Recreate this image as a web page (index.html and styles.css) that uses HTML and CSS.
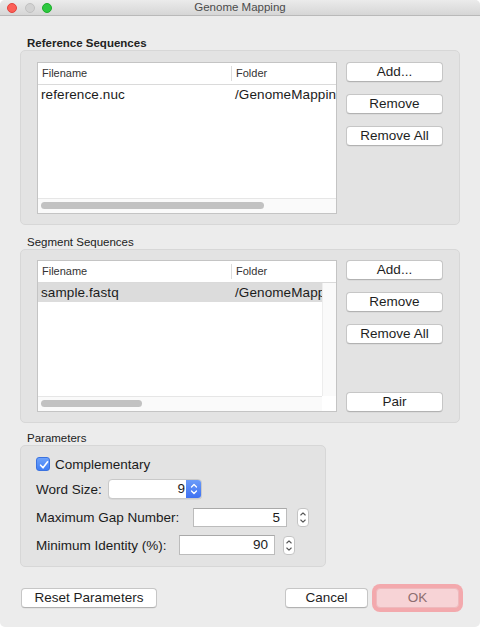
FILE: index.html
```html
<!DOCTYPE html>
<html>
<head>
<meta charset="utf-8">
<title>Genome Mapping</title>
<link rel="stylesheet" href="styles.css">
</head>
<body>
<div class="window">
  <div class="titlebar">
    <div class="lights">
      <span class="light red"></span>
      <span class="light gray"></span>
      <span class="light green"></span>
    </div>
    <div class="title">Genome Mapping</div>
    <div></div>
  </div>

  <div class="main">
    <div class="section-label bold">Reference Sequences</div>
    <div class="group group-list">
      <div class="table">
        <div class="thead">
          <div class="th">Filename</div>
          <div class="th th-sep">Folder</div>
        </div>
        <div class="tbody">
          <div class="rows">
            <div class="tr">
              <div class="td">reference.nuc</div>
              <div class="td td-folder">/GenomeMapping</div>
            </div>
          </div>
        </div>
        <div class="hscroll">
          <div class="htrack"><div class="thumb thumb-ref"></div></div>
        </div>
      </div>
      <div class="btn-col">
        <button class="btn">Add...</button>
        <button class="btn">Remove</button>
        <button class="btn">Remove All</button>
      </div>
    </div>

    <div class="section-label label-gap">Segment Sequences</div>
    <div class="group group-list group-seg">
      <div class="table">
        <div class="thead">
          <div class="th">Filename</div>
          <div class="th th-sep">Folder</div>
        </div>
        <div class="tbody">
          <div class="rows">
            <div class="tr selected">
              <div class="td">sample.fastq</div>
              <div class="td td-folder">/GenomeMappi</div>
            </div>
          </div>
          <div class="vtrack"></div>
        </div>
        <div class="hscroll">
          <div class="htrack"><div class="thumb thumb-seg"></div></div>
          <div class="corner"></div>
        </div>
      </div>
      <div class="btn-col">
        <button class="btn">Add...</button>
        <button class="btn">Remove</button>
        <button class="btn">Remove All</button>
        <button class="btn btn-pair">Pair</button>
      </div>
    </div>

    <div class="section-label label-gap-sm">Parameters</div>
    <div class="group group-params">
      <div class="prow prow-check">
        <span class="checkbox">
          <svg width="14" height="14" viewBox="0 0 14 14"><path d="M3.6 7.2 L6 9.8 L10.6 3.8" fill="none" stroke="#fff" stroke-width="1.6" stroke-linecap="round" stroke-linejoin="round"/></svg>
        </span>
        <span class="check-label">Complementary</span>
      </div>
      <div class="prow">
        <span class="plabel lbl-word">Word Size:</span>
        <span class="combo">
          <span class="combo-value">9</span>
          <span class="combo-step">
            <svg width="16" height="20" viewBox="0 0 16 20"><path d="M5.5 8 L8 5.5 L10.5 8 M5.5 12 L8 14.5 L10.5 12" fill="none" stroke="#fff" stroke-width="1.3" stroke-linecap="round" stroke-linejoin="round"/></svg>
          </span>
        </span>
      </div>
      <div class="prow">
        <span class="plabel lbl-gap">Maximum Gap Number:</span>
        <span class="field field-gap">5</span>
        <span class="stepper stepper-gap">
          <svg width="12" height="19" viewBox="0 0 12 19"><path d="M3.8 7 L6 4.8 L8.2 7 M3.8 12 L6 14.2 L8.2 12" fill="none" stroke="#555" stroke-width="1.1" stroke-linecap="round" stroke-linejoin="round"/></svg>
        </span>
      </div>
      <div class="prow">
        <span class="plabel lbl-id">Minimum Identity (%):</span>
        <span class="field field-id">90</span>
        <span class="stepper stepper-id">
          <svg width="12" height="19" viewBox="0 0 12 19"><path d="M3.8 7 L6 4.8 L8.2 7 M3.8 12 L6 14.2 L8.2 12" fill="none" stroke="#555" stroke-width="1.1" stroke-linecap="round" stroke-linejoin="round"/></svg>
        </span>
      </div>
    </div>
  </div>

  <div class="footer">
    <button class="btn btn-reset">Reset Parameters</button>
    <div class="footer-right">
      <button class="btn btn-cancel">Cancel</button>
      <button class="btn btn-ok">OK</button>
    </div>
  </div>
</div>
</body>
</html>
```

FILE: styles.css
```css
* { box-sizing: border-box; }

html, body {
  margin: 0;
  padding: 0;
  background: #ffffff;
}

body {
  font-family: "Liberation Sans", Arial, sans-serif;
  color: #1b1b1b;
}

.window {
  width: 480px;
  height: 627px;
  background: #ececec;
  border-radius: 5px;
  overflow: hidden;
  display: flex;
  flex-direction: column;
}

/* Title bar */
.titlebar {
  height: 16px;
  flex: none;
  display: grid;
  grid-template-columns: 1fr auto 1fr;
  align-items: center;
  background: linear-gradient(#ebebeb, #d6d6d6);
  border-bottom: 1px solid #b9b9b9;
}

.lights {
  display: flex;
  align-items: center;
  gap: 7.5px;
  padding-left: 7px;
}

.light {
  width: 10px;
  height: 10px;
  border-radius: 50%;
  display: block;
}

.red { background: #fc5f57; border: 0.5px solid #e0443e; }
.gray { background: #d2d2d2; border: 0.5px solid #c0c0c0; }
.green { background: #2dc840; border: 0.5px solid #1dad2b; }

.title {
  font-size: 11.5px;
  color: #4b4b4b;
  line-height: 15px;
}

/* Main content */
.main {
  padding: 20px 20px 0 20px;
  display: flex;
  flex-direction: column;
}

.section-label {
  font-size: 11.5px;
  line-height: 14px;
  height: 14px;
  padding-left: 7px;
  color: #222;
}

.bold { font-weight: bold; }
.label-gap { margin-top: 10px; }
.label-gap-sm { margin-top: 8px; }

.group {
  background: #e3e3e3;
  border: 1px solid #d7d7d7;
  border-radius: 5px;
}

.group-list {
  display: flex;
  gap: 9px;
  padding: 11px 15px 10px 16px;
}

.group-seg { padding-top: 10px; }

/* Table */
.table {
  width: 300px;
  height: 152px;
  flex: none;
  background: #fff;
  border: 1px solid #c4c4c4;
  display: flex;
  flex-direction: column;
  overflow: hidden;
}

.thead {
  height: 22px;
  flex: none;
  display: grid;
  grid-template-columns: 193px 1fr;
  align-items: center;
  border-bottom: 1px solid #dadada;
  font-size: 11px;
  color: #333;
}

.th {
  padding-left: 4px;
  line-height: 15px;
  white-space: nowrap;
  overflow: hidden;
}

.th-sep {
  border-left: 1px solid #dcdcdc;
  padding-left: 4px;
}

.tbody {
  flex: 1;
  display: flex;
  min-height: 0;
}

.rows {
  flex: 1;
  min-width: 0;
}

.tr {
  height: 20px;
  display: grid;
  grid-template-columns: 193px 1fr;
  align-items: center;
  font-size: 13.5px;
  line-height: 20px;
  letter-spacing: 0.1px;
}

.tr.selected {
  background: #dcdcdc;
  height: 19px;
  line-height: 19px;
}

.td {
  padding-left: 3px;
  white-space: nowrap;
  overflow: hidden;
}

.td-folder { padding-left: 4px; }

.vtrack {
  width: 14px;
  flex: none;
  background: #fafafa;
  border-left: 1px solid #ededed;
}

.hscroll {
  height: 15px;
  flex: none;
  display: flex;
}

.htrack {
  flex: 1;
  background: #fafafa;
  border-top: 1px solid #e6e6e6;
  padding: 3px 0 0 3px;
}

.corner {
  width: 14px;
  background: #fff;
}

.thumb {
  height: 7px;
  border-radius: 4px;
  background: #c2c2c2;
}

.thumb-ref { width: 223px; }
.thumb-seg { width: 101px; }

/* Buttons */
.btn-col {
  display: flex;
  flex-direction: column;
  gap: 12px;
}

.btn {
  font-family: "Liberation Sans", Arial, sans-serif;
  font-size: 13.5px;
  color: #1e1e1e;
  height: 20px;
  width: 97px;
  padding: 0;
  margin: 0;
  background: #ffffff;
  border: 1px solid #c6c6c6;
  border-bottom-color: #b2b2b2;
  border-radius: 4px;
  box-shadow: 0 0.5px 0.5px rgba(0, 0, 0, 0.08);
  line-height: 18px;
}

.btn-pair { margin-top: auto; }

/* Parameters */
.group-params {
  width: 306px;
  padding: 11px 10px 11px 15px;
  display: flex;
  flex-direction: column;
  gap: 8px;
}

.prow {
  height: 20px;
  display: flex;
  align-items: center;
  font-size: 13.5px;
}

.prow-check { height: 14px; }

.checkbox {
  width: 14px;
  height: 14px;
  border-radius: 3px;
  background: linear-gradient(#6ea2fa, #3f7ef5);
  border: 0.5px solid #3a72e0;
  display: block;
  flex: none;
}

.checkbox svg { display: block; }

.check-label { margin-left: 5px; }

.plabel { flex: none; white-space: nowrap; }
.lbl-word { width: 72px; }
.lbl-gap { width: 157px; }
.lbl-id { width: 143px; }

.combo {
  width: 94px;
  height: 20px;
  display: flex;
  border-radius: 4px;
  background: #fff;
  border: 1px solid #c9c9c9;
  overflow: hidden;
  box-shadow: 0 0.5px 0.5px rgba(0, 0, 0, 0.1);
}

.combo-value {
  flex: 1;
  text-align: right;
  padding-right: 1px;
  line-height: 18px;
}

.combo-step {
  width: 16px;
  flex: none;
  background: linear-gradient(#6d9ef9, #3b6ef2);
  margin: -1px -1px -1px 0;
  height: 20px;
}

.combo-step svg { display: block; }

.field {
  height: 20px;
  background: #fff;
  border: 1px solid #bcbcbc;
  border-top-color: #a9a9a9;
  text-align: right;
  padding-right: 6px;
  line-height: 18px;
  flex: none;
}

.field-gap { width: 94px; height: 19px; }
.field-id { width: 96px; }

.stepper {
  width: 12px;
  height: 19px;
  flex: none;
  background: #fff;
  border: 1px solid #c4c4c4;
  border-radius: 4px;
  overflow: hidden;
}

.stepper svg { display: block; margin: -1px 0 0 -1px; }

.stepper-gap { margin-left: 10px; }
.stepper-id { margin-left: 8px; }

/* Footer */
.footer {
  margin-top: 21px;
  padding: 0 21px 0 21px;
  display: flex;
  justify-content: space-between;
  align-items: center;
}

.footer-right {
  display: flex;
  gap: 8px;
}

.btn-reset { width: 136px; }
.btn-cancel { width: 83px; }

.btn-ok {
  width: 83px;
  background: #f7d3d6;
  border-color: #eeb9bd;
  color: #8d6e70;
  box-shadow: 0 0 0 4px #f3a9ad;
}
```
